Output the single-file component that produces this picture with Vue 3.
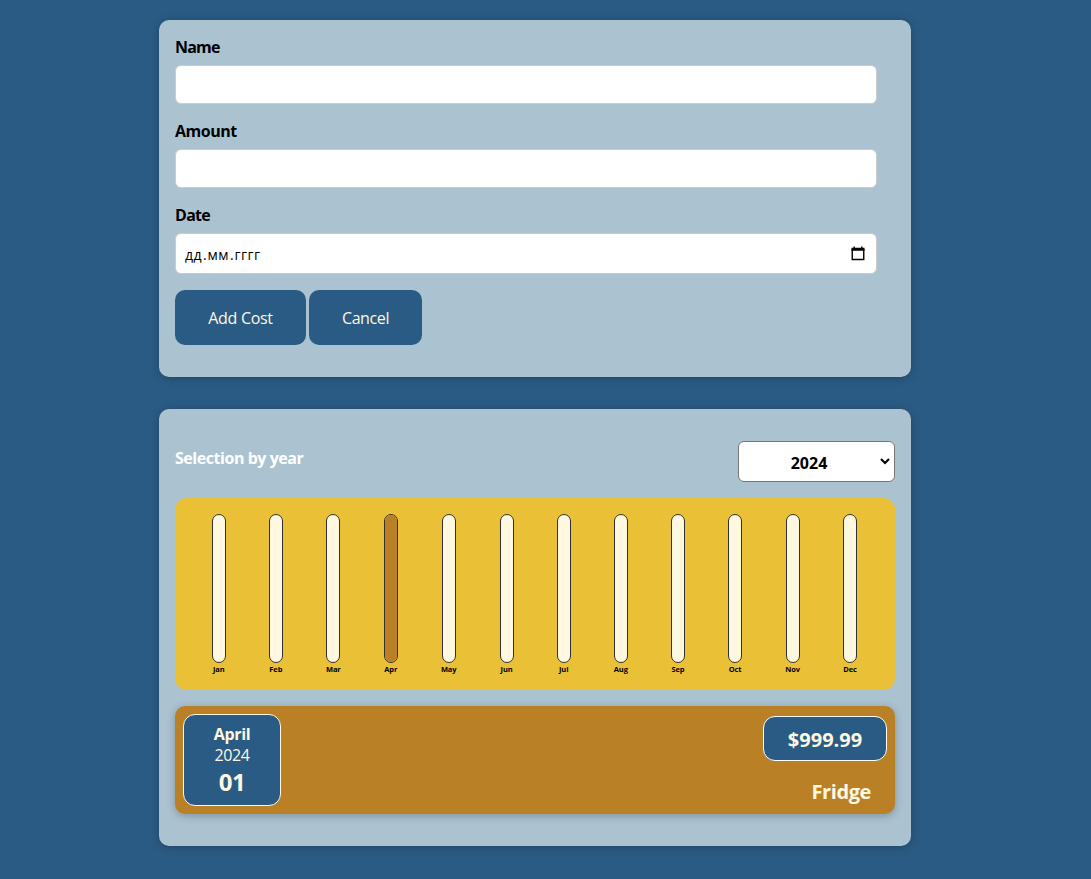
<script setup>
import { ref } from 'vue'

const name = ref('')
const amount = ref('')
const months = ['Jan', 'Feb', 'Mar', 'Apr', 'May', 'Jun', 'Jul', 'Aug', 'Sep', 'Oct', 'Nov', 'Dec']
  .map((label) => ({ label, fill: label === 'Apr' ? 100 : 0 }))
</script>

<template>
  <main class="page">
    <form class="card form" @submit.prevent>
      <div class="field">
        <label for="name"><span class="t-name">Name</span></label>
        <input id="name" v-model="name" type="text" />
      </div>
      <div class="field">
        <label for="amount"><span class="t-amount">Amount</span></label>
        <input id="amount" v-model="amount" type="text" />
      </div>
      <div class="field">
        <label><span class="t-date">Date</span></label>
        <div class="date-input">
          <span>дд<i>.</i>мм<i>.</i>гггг</span>
          <svg width="14" height="15" viewBox="0 0 14 15">
            <path d="M1.25 3v10.5h11.5V3" fill="none" stroke="#000" stroke-width="1.4" />
            <path d="M.5 1.8h13v2.9H.5zM2.5.5h1.4V2H2.5zM10.1.5h1.4V2h-1.4z" />
          </svg>
        </div>
      </div>
      <div class="actions">
        <button class="add" type="submit">Add Cost</button>
        <button class="cancel" type="button">Cancel</button>
      </div>
    </form>

    <section class="card costs">
      <div class="filter">
        <span class="filter-label">Selection by year</span>
        <div class="select">
          <span>2024</span>
          <svg width="10" height="7" viewBox="0 0 10 7">
            <path d="M1 1l4 4 4-4" fill="none" stroke="#000" stroke-width="2" />
          </svg>
        </div>
      </div>
      <div class="chart">
        <div v-for="m in months" :key="m.label" class="month">
          <div class="bar"><div class="fill" :style="{ height: m.fill + '%' }"></div></div>
          <span class="month-label">{{ m.label }}</span>
        </div>
      </div>
      <article class="item">
        <div class="date">
          <div class="date-month">April</div>
          <div class="date-year">2024</div>
          <div class="date-day">01</div>
        </div>
        <div class="description">
          <div class="price">$999.99</div>
          <h2>Fridge</h2>
        </div>
      </article>
    </section>
  </main>
</template>

<style>
html,
body {
  background: #2a5b84;
}
</style>

<style scoped>
* {
  box-sizing: border-box;
}
.page {
  width: 752px;
  margin: 0 0 0 159px;
  padding: 20px 0 33px;
  font-family: "Segoe UI", "Open Sans", "Noto Sans", sans-serif;
  font-size: 16px;
  color: #000;
}
.card {
  background: #abc3d1;
  border-radius: 10px;
  padding: 16px;
  box-shadow: 0 1px 8px rgba(0, 0, 0, 0.25);
}
.form {
  height: 357px;
}
.field {
  margin-bottom: 16px;
}
label {
  display: block;
  height: 21px;
  line-height: 23px;
  margin-bottom: 8px;
  font-weight: 700;
}
label span {
  display: inline-block;
}
.t-name {
  letter-spacing: -0.8px;
}
.t-amount {
  letter-spacing: -0.5px;
}
.t-date {
  letter-spacing: -0.7px;
}
input {
  display: block;
  width: 702px;
  height: 39px;
  padding: 8px;
  border: 1px solid #ccc;
  border-radius: 6px;
  background: #fff;
  font: inherit;
  outline: none;
}
.date-input {
  display: flex;
  align-items: center;
  justify-content: space-between;
  width: 702px;
  height: 41px;
  padding: 2px 11px 0 9px;
  border: 1px solid #ccc;
  border-radius: 6px;
  background: #fff;
  font-size: 14px;
  letter-spacing: 0.5px;
}
.date-input i {
  padding: 0 0.2px 0 1px;
  font-style: normal;
}
.date-input svg {
  margin-bottom: 2px;
}
.actions {
  display: flex;
  gap: 3px;
}
button {
  height: 55px;
  padding: 1px 0 0;
  border: 0;
  border-radius: 10px;
  background: #2a5b84;
  color: #fff8e1;
  font: inherit;
}
.add {
  width: 131px;
  letter-spacing: -0.3px;
}
.cancel {
  width: 113px;
  letter-spacing: -0.4px;
}
.costs {
  height: 437px;
  margin-top: 32px;
  padding-top: 32px;
}
.filter {
  display: flex;
  justify-content: space-between;
}
.filter-label {
  margin-top: 7px;
  line-height: 21px;
  font-weight: 700;
  color: #fff;
  letter-spacing: -0.46px;
}
.select {
  display: flex;
  align-items: center;
  width: 157px;
  height: 41px;
  padding: 0 4px 0 0;
  border: 1px solid #767676;
  border-radius: 6px;
  background: #fff;
  font-weight: 700;
}
.select span {
  flex: 1;
  text-align: center;
  padding: 2px 1px 0 0;
}
.chart {
  display: flex;
  justify-content: space-around;
  height: 192px;
  margin-top: 16px;
  padding: 16px 16.4px 16px 15.2px;
  border-radius: 12px;
  background: #eac136;
}
.month {
  display: flex;
  flex-direction: column;
  align-items: center;
}
.bar {
  display: flex;
  flex-direction: column;
  justify-content: flex-end;
  flex: none;
  width: 14px;
  height: 149px;
  border: 1px solid #313131;
  border-radius: 12px;
  background: #fff8e1;
  overflow: hidden;
}
.fill {
  background: #ba8026;
}
.month-label {
  margin-top: 1px;
  font-size: 7.5px;
  line-height: 11px;
  font-weight: 700;
  letter-spacing: -0.1px;
}
.item {
  display: flex;
  justify-content: space-between;
  height: 108px;
  margin-top: 16px;
  padding: 8px;
  border-radius: 10px;
  background: #ba8026;
  color: #fff8e1;
  box-shadow: 0 2px 8px rgba(0, 0, 0, 0.25);
}
.date {
  width: 98px;
  height: 92px;
  padding-top: 8px;
  border: 1px solid #fff8e1;
  border-radius: 12px;
  background: #2a5b84;
  text-align: center;
}
.date-month {
  line-height: 22px;
  font-weight: 700;
  letter-spacing: -0.3px;
}
.date-year {
  line-height: 21px;
  letter-spacing: -0.4px;
}
.date-day {
  line-height: 32px;
  font-size: 24px;
  font-weight: 700;
  letter-spacing: -0.4px;
}
.description {
  display: flex;
  flex-direction: column;
  align-items: flex-end;
  padding-top: 2px;
}
.price {
  width: 124px;
  height: 45px;
  border: 1px solid #fff;
  border-radius: 12px;
  background: #2a5b84;
  text-align: center;
  line-height: 45px;
  font-size: 20px;
  font-weight: 700;
}
h2 {
  margin: 17px 16px 0 0;
  line-height: 27px;
  font-size: 20px;
  font-weight: 700;
  letter-spacing: -0.4px;
}
</style>
